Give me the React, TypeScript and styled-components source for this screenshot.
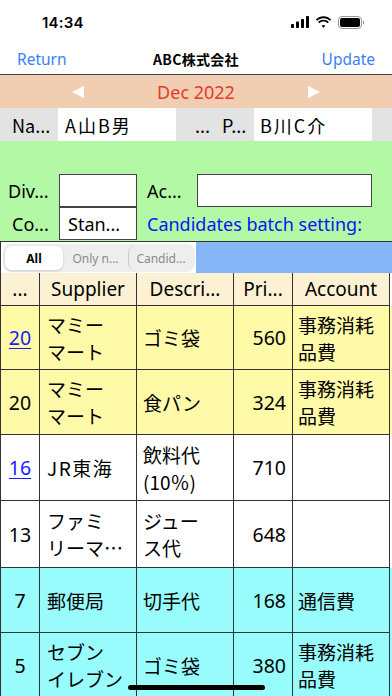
import React from "react";
import styled, { createGlobalStyle } from "styled-components";

const Global = createGlobalStyle`
  html, body { margin: 0; padding: 0; background: #fff; }
  body { font-family: "Noto Sans CJK JP", "Noto Sans", sans-serif; }
  * { box-sizing: border-box; }
`;

const Screen = styled.div`
  position: relative;
  width: 392px;
  height: 696px;
  overflow: hidden;
  background: #fff;
  color: #000;
`;

const StatusBar = styled.div`
  height: 44px;
  display: flex;
  align-items: center;
  justify-content: space-between;
  padding: 0 27px 0 42px;
`;

const Time = styled.span`
  font-family: Inter, "Noto Sans", sans-serif;
  font-weight: 600;
  font-size: 15px;
  letter-spacing: 0.2px;
`;

const StatusIcons = styled.div`
  display: flex;
  align-items: center;
  gap: 6px;
`;

const NavBar = styled.div`
  height: 31px;
  display: grid;
  grid-template-columns: 1fr auto 1fr;
  align-items: center;
  padding: 0 17px 0 17px;
  border-bottom: 1.5px solid #444;
`;

const NavButton = styled.span<{ $right?: boolean }>`
  font-family: "Noto Sans", sans-serif;
  font-size: 15.5px;
  color: #3a7ff6;
  justify-self: ${(p) => (p.$right ? "end" : "start")};
`;

const NavTitle = styled.span`
  font-size: 14px;
  font-weight: 700;
  letter-spacing: 0.3px;
`;

const DateBar = styled.div`
  height: 33px;
  background: #f1cdb1;
  display: flex;
  align-items: center;
  justify-content: center;
`;

const ArrowBox = styled.div`
  width: 116px;
  display: flex;
  justify-content: center;
`;

const DateText = styled.span`
  font-family: "Noto Sans", sans-serif;
  font-size: 18px;
  color: #e8382c;
  width: 120px;
  text-align: center;
`;

const InfoRow = styled.div`
  height: 33px;
  display: grid;
  grid-template-columns: 58px 118px 78px 118px 20px;
  background: #e3e3e3;
  font-size: 18px;
`;

const InfoCell = styled.div<{ $white?: boolean; $pad?: number; $spread?: boolean }>`
  background: ${(p) => (p.$white ? "#fff" : "transparent")};
  display: flex;
  align-items: center;
  padding-left: ${(p) => p.$pad ?? 6}px;
  letter-spacing: ${(p) => (p.$spread ? "2px" : "0")};
  white-space: nowrap;
  overflow: hidden;
`;

const GreenArea = styled.div`
  background: #b3f9a5;
  padding-top: 33px;
  height: 100px;
`;

const FormRow = styled.div`
  display: grid;
  grid-template-columns: 59px 78px 10px 50px 175px;
  align-items: center;
  height: 33px;
`;

const Label = styled.span<{ $pad?: number }>`
  font-family: "Noto Sans", sans-serif;
  font-size: 18px;
  padding-left: ${(p) => p.$pad ?? 8}px;
  white-space: nowrap;
`;

const InputBox = styled.div`
  height: 33px;
  background: #fff;
  border: 1px solid #444;
  display: flex;
  align-items: center;
  padding-left: 8px;
  font-family: "Noto Sans", sans-serif;
  font-size: 18px;
  white-space: nowrap;
`;

const BatchText = styled.span`
  grid-column: 4 / span 3;
  font-family: "Noto Sans", sans-serif;
  font-size: 18px;
  color: #0a14f5;
  white-space: nowrap;
`;

const TableWrap = styled.div`
  border-top: 1.5px solid #333;
  border-left: 1.5px solid #333;
`;

const SegmentRow = styled.div`
  height: 31px;
  display: grid;
  grid-template-columns: 195px 1fr;
  border-bottom: 1.5px solid #333;
`;

const SegmentHolder = styled.div`
  background: #fff;
  padding: 2px 1px 1px 2px;
`;

const Segmented = styled.div`
  height: 28px;
  background: #eeeeef;
  border-radius: 8px;
  display: grid;
  grid-template-columns: 58px 1fr 1fr;
  padding: 2px;
  align-items: center;
`;

const Segment = styled.div<{ $active?: boolean; $sep?: boolean }>`
  height: 24px;
  display: flex;
  align-items: center;
  justify-content: center;
  font-family: "Noto Sans", sans-serif;
  font-size: 12px;
  font-weight: ${(p) => (p.$active ? 700 : 400)};
  color: ${(p) => (p.$active ? "#000" : "#8a8a8e")};
  background: ${(p) => (p.$active ? "#fff" : "transparent")};
  border-radius: 7px;
  box-shadow: ${(p) => (p.$active ? "0 1px 3px rgba(0,0,0,0.15)" : "none")};
  border-left: ${(p) => (p.$sep ? "1px solid #c8c8cc" : "none")};
  white-space: nowrap;
`;

const BlueFill = styled.div`
  background: #86b6f8;
`;

const Grid = styled.div`
  display: grid;
  grid-template-columns: 39px 97px 97px 59px 97px 3px;
`;

const HeadCell = styled.div`
  height: 33px;
  background: #fcf1d3;
  border-right: 1.5px solid #333;
  border-bottom: 1.5px solid #333;
  display: flex;
  align-items: center;
  justify-content: center;
  font-family: "Noto Sans", sans-serif;
  font-size: 19px;
  white-space: nowrap;
`;

const Filler = styled.div<{ $bg: string }>`
  background: ${(p) => p.$bg};
`;

const Cell = styled.div<{ $bg: string; $align?: string; $h: number; $pad?: number }>`
  height: ${(p) => p.$h}px;
  background: ${(p) => p.$bg};
  border-right: 1.5px solid #333;
  border-bottom: 1.5px solid #333;
  display: flex;
  flex-direction: column;
  justify-content: center;
  align-items: ${(p) => p.$align || "flex-start"};
  padding: 0 ${(p) => p.$pad ?? 6}px;
  font-size: 19px;
  line-height: 27px;
  white-space: nowrap;
  overflow: hidden;
`;

const CellLine = styled.span<{ $spread?: boolean }>`
  letter-spacing: ${(p) => (p.$spread ? "1.5px" : "0")};
`;

const Num = styled.span`
  font-family: "Noto Sans", sans-serif;
  font-size: 19.5px;
`;

const LinkNum = styled(Num)`
  color: #1a1aff;
  text-decoration: underline;
  text-underline-offset: 3px;
`;

const HomeIndicator = styled.div`
  position: absolute;
  left: 128px;
  bottom: 6px;
  width: 137px;
  height: 5px;
  border-radius: 3px;
  background: #000;
`;

type Row = {
  bg: string;
  h: number;
  no: string;
  link?: boolean;
  supplier: string[];
  spreadSupplier?: boolean;
  desc: string[];
  price: string;
  account: string[];
};

const YELLOW = "#fffaa8";
const WHITE = "#ffffff";
const CYAN = "#98fcfc";

const rows: Row[] = [
  { bg: YELLOW, h: 64, no: "20", link: true, supplier: ["マミー", "マート"], desc: ["ゴミ袋"], price: "560", account: ["事務消耗", "品費"] },
  { bg: YELLOW, h: 65, no: "20", supplier: ["マミー", "マート"], desc: ["食パン"], price: "324", account: ["事務消耗", "品費"] },
  { bg: WHITE, h: 66, no: "16", link: true, supplier: ["JR東海"], spreadSupplier: true, desc: ["飲料代", "(10％)"], price: "710", account: [] },
  { bg: WHITE, h: 67, no: "13", supplier: ["ファミ", "リーマ…"], desc: ["ジュー", "ス代"], price: "648", account: [] },
  { bg: CYAN, h: 65, no: "7", supplier: ["郵便局"], desc: ["切手代"], price: "168", account: ["通信費"] },
  { bg: CYAN, h: 65, no: "5", supplier: ["セブン", "イレブン"], desc: ["ゴミ袋"], price: "380", account: ["事務消耗", "品費"] },
];

const Lines = ({ lines, spread }: { lines: string[]; spread?: boolean }) => (
  <>
    {lines.map((l, i) => (
      <CellLine key={i} $spread={spread}>
        {l}
      </CellLine>
    ))}
  </>
);

const Signal = () => (
  <svg width="18" height="12" viewBox="0 0 18 12">
    <rect x="0" y="8" width="3" height="4" rx="0.8" fill="#000" />
    <rect x="5" y="5.5" width="3" height="6.5" rx="0.8" fill="#000" />
    <rect x="10" y="3" width="3" height="9" rx="0.8" fill="#000" />
    <rect x="15" y="0" width="3" height="12" rx="0.8" fill="#000" />
  </svg>
);

const Wifi = () => (
  <svg width="17" height="12" viewBox="0 0 17 12">
    <path d="M8.5 2.2c2.5 0 4.7 1 6.4 2.6l1.3-1.3C14.1 1.4 11.4.2 8.5.2S2.9 1.4.8 3.5l1.3 1.3C3.8 3.2 6 2.2 8.5 2.2z" fill="#000" />
    <path d="M8.5 5.6c1.6 0 3 .6 4.1 1.6l1.3-1.3C12.5 4.5 10.6 3.7 8.5 3.7S4.5 4.5 3.1 5.9l1.3 1.3c1.1-1 2.5-1.6 4.1-1.6z" fill="#000" />
    <path d="M8.5 9c.8 0 1.4.3 1.9.7L8.5 11.8 6.6 9.7c.5-.4 1.1-.7 1.9-.7z" fill="#000" />
  </svg>
);

const Battery = () => (
  <svg width="27" height="13" viewBox="0 0 27 13">
    <rect x="0.5" y="0.5" width="23" height="12" rx="3.5" fill="none" stroke="#999" />
    <rect x="2" y="2" width="20" height="9" rx="2" fill="#000" />
    <path d="M25 4.5v4c.8-.3 1.3-1.1 1.3-2s-.5-1.7-1.3-2z" fill="#999" />
  </svg>
);

const Tri = ({ dir }: { dir: "l" | "r" }) => (
  <svg width="14" height="14" viewBox="0 0 14 14">
    {dir === "l" ? <polygon points="13,1 13,13 1,7" fill="#fff" /> : <polygon points="1,1 1,13 13,7" fill="#fff" />}
  </svg>
);

export default function App() {
  return (
    <Screen>
      <Global />
      <StatusBar>
        <Time>14:34</Time>
        <StatusIcons>
          <Signal />
          <Wifi />
          <Battery />
        </StatusIcons>
      </StatusBar>
      <NavBar>
        <NavButton>Return</NavButton>
        <NavTitle>ABC株式会社</NavTitle>
        <NavButton $right>Update</NavButton>
      </NavBar>
      <DateBar>
        <ArrowBox>
          <Tri dir="l" />
        </ArrowBox>
        <DateText>Dec 2022</DateText>
        <ArrowBox>
          <Tri dir="r" />
        </ArrowBox>
      </DateBar>
      <InfoRow>
        <InfoCell $pad={12}>Na...</InfoCell>
        <InfoCell $white $spread $pad={7}>A山B男</InfoCell>
        <InfoCell $pad={19}>...&nbsp;&nbsp;&nbsp;P...</InfoCell>
        <InfoCell $white $spread $pad={6}>B川C介</InfoCell>
        <InfoCell />
      </InfoRow>
      <GreenArea>
        <FormRow>
          <Label>Div...</Label>
          <InputBox />
          <span />
          <Label $pad={0}>Ac...</Label>
          <InputBox />
        </FormRow>
        <FormRow>
          <Label $pad={12}>Co...</Label>
          <InputBox>Stan...</InputBox>
          <span />
          <BatchText>Candidates batch setting:</BatchText>
        </FormRow>
      </GreenArea>
      <TableWrap>
        <SegmentRow>
          <SegmentHolder>
            <Segmented>
              <Segment $active>All</Segment>
              <Segment>Only n...</Segment>
              <Segment $sep>Candid...</Segment>
            </Segmented>
          </SegmentHolder>
          <BlueFill />
        </SegmentRow>
        <Grid>
          <HeadCell>...</HeadCell>
          <HeadCell>Supplier</HeadCell>
          <HeadCell>Descri...</HeadCell>
          <HeadCell>Pri...</HeadCell>
          <HeadCell>Account</HeadCell>
          <Filler $bg="#fff" />
          {rows.map((r, i) => (
            <React.Fragment key={i}>
              <Cell $bg={r.bg} $h={r.h} $align="center" $pad={0}>
                {r.link ? <LinkNum>{r.no}</LinkNum> : <Num>{r.no}</Num>}
              </Cell>
              <Cell $bg={r.bg} $h={r.h} $pad={7}>
                <Lines lines={r.supplier} spread={r.spreadSupplier} />
              </Cell>
              <Cell $bg={r.bg} $h={r.h} $pad={6}>
                <Lines lines={r.desc} />
              </Cell>
              <Cell $bg={r.bg} $h={r.h} $align="flex-end" $pad={6}>
                <Num>{r.price}</Num>
              </Cell>
              <Cell $bg={r.bg} $h={r.h} $pad={5}>
                <Lines lines={r.account} />
              </Cell>
              <Filler $bg={r.bg} />
            </React.Fragment>
          ))}
        </Grid>
      </TableWrap>
      <HomeIndicator />
    </Screen>
  );
}
